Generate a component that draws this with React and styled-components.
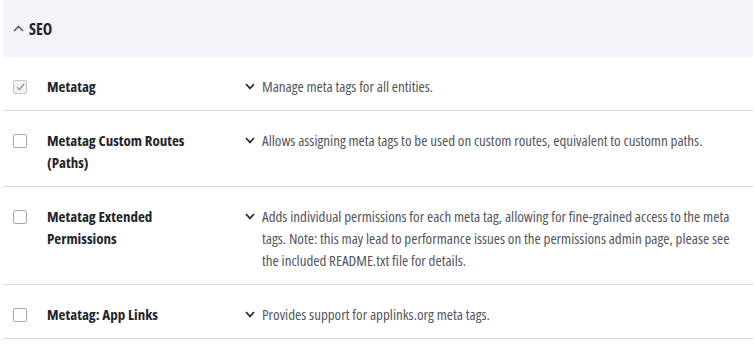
import styled, { createGlobalStyle } from 'styled-components';

const GlobalStyle = createGlobalStyle`
  body {
    margin: 0;
    background: #fff;
    font-family: "Open Sans", "Noto Sans", sans-serif;
    font-stretch: 80%;
    color: #232429;
  }
`;

const Panel = styled.div`
  margin: 0 3px;
  width: 750px;
`;

const Header = styled.div`
  height: 57px;
  background: #f3f4f9;
  display: flex;
  align-items: center;
  gap: 5px;
  padding-left: 10px;
  font-size: 16px;
  font-weight: 700;
  color: #232429;
`;

const Row = styled.div`
  display: grid;
  grid-template-columns: 34px 198px 1fr;
  padding: 18px 10px 13px;
  border-bottom: 1px solid #dadbe0;
  font-size: 15px;
  line-height: 22px;
`;

const Box = styled.span`
  width: 14px;
  height: 14px;
  margin-top: 5px;
  box-sizing: border-box;
  border: 1px solid ${(p) => (p.$checked ? '#c4c5ca' : '#a9aab0')};
  border-radius: 2px;
  background: ${(p) => (p.$checked ? '#f1f1f3' : '#fff')};
  display: flex;
  align-items: center;
  justify-content: center;
`;

const Title = styled.div`
  font-weight: 700;
  color: #232429;
  padding-right: 28px;
`;

const Desc = styled.div`
  display: flex;
  gap: 7px;
  color: #55565c;
`;

const Chevron = styled.svg`
  flex: none;
  margin-top: 8px;
`;

const modules = [
  { name: 'Metatag', desc: 'Manage meta tags for all entities.', checked: true },
  {
    name: 'Metatag Custom Routes (Paths)',
    desc: 'Allows assigning meta tags to be used on custom routes, equivalent to customn paths.',
  },
  {
    name: 'Metatag Extended Permissions',
    desc: 'Adds individual permissions for each meta tag, allowing for fine-grained access to the meta tags. Note: this may lead to performance issues on the permissions admin page, please see the included README.txt file for details.',
  },
  { name: 'Metatag: App Links', desc: 'Provides support for applinks.org meta tags.' },
];

export default function App() {
  return (
    <Panel>
      <GlobalStyle />
      <Header>
        <svg width="11" height="7" viewBox="0 0 11 7">
          <path d="M1 6 L5.5 1.3 L10 6" fill="none" stroke="#3a3b40" strokeWidth="1.2" />
        </svg>
        SEO
      </Header>
      {modules.map((m) => (
        <Row key={m.name}>
          <div>
            <Box $checked={m.checked}>
              {m.checked && (
                <svg width="9" height="8" viewBox="0 0 9 8">
                  <path d="M1 4.2 L3.4 6.6 L8 1" fill="none" stroke="#8f9096" strokeWidth="1.2" />
                </svg>
              )}
            </Box>
          </div>
          <Title>{m.name}</Title>
          <Desc>
            <Chevron width="10" height="7" viewBox="0 0 10 7">
              <path d="M1 1 L5 5.4 L9 1" fill="none" stroke="#2a2b30" strokeWidth="1.7" />
            </Chevron>
            <span>{m.desc}</span>
          </Desc>
        </Row>
      ))}
    </Panel>
  );
}
